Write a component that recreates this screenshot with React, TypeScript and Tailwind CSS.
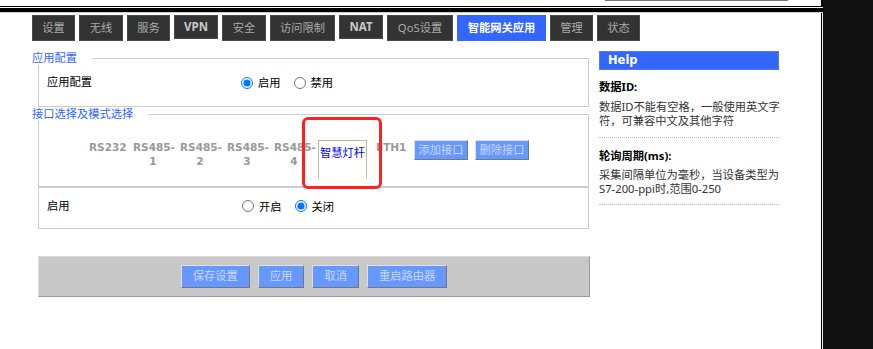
const tabs = [
  { t: '设置', w: 'w-[43px]' },
  { t: '无线', w: 'w-[44px]' },
  { t: '服务', w: 'w-[43px]' },
  { t: 'VPN', w: 'w-[44px]', en: true },
  { t: '安全', w: 'w-[44px]' },
  { t: '访问限制', w: 'w-[65px]' },
  { t: 'NAT', w: 'w-[44px]', en: true },
  { t: 'QoS设置', w: 'w-[66px]' },
  { t: '智能网关应用', w: 'w-[89px]', active: true },
  { t: '管理', w: 'w-[43px]' },
  { t: '状态', w: 'w-[43px]' },
];

function Radio({ name, on, label, className = '' }: { name: string; on?: boolean; label: string; className?: string }) {
  return (
    <label className={`inline-flex items-center ${className}`}>
      <input type="radio" name={name} defaultChecked={on} className="m-0 w-[12px] h-[12px]" />
      <span className="ml-[5px] mt-[2px]">{label}</span>
    </label>
  );
}

function Legend({ children }: { children: React.ReactNode }) {
  return (
    <span className="absolute -top-[8px] -left-[7px] bg-white pr-[15px] leading-[14px] text-[#3366ff]">
      {children}
    </span>
  );
}

export default function App() {
  return (
    <div className="w-[873px] h-[349px] flex bg-[#111] overflow-hidden font-['Noto_Sans','Noto_Sans_CJK_SC',sans-serif] text-[11.25px] text-black">
      <div className="w-[823px] flex flex-col">
        {/* top strip */}
        <div className="h-[6px] bg-white border-r-2 border-black">
          <div className="ml-[605px] w-[183px] h-[1px] bg-[#777]" />
        </div>
        <div className="h-[1px] bg-black" />
        <div className="h-[1px] bg-white" />
        <div className="h-[4px] bg-black" />
        <div className="h-[1px] bg-[#ccc]" />

        <div className="flex-1 flex">
          <div className="flex-1 bg-white">
            {/* tabs */}
            <div className="flex items-start gap-[4px] pl-[32px] mt-[2px]">
              {tabs.map((tab) => (
                <div
                  key={tab.t}
                  className={`${tab.w} flex items-center justify-center whitespace-nowrap ${
                    tab.active
                      ? 'h-[26px] border border-[#3366ff] bg-[#3366ff] text-white font-bold'
                      : tab.en
                        ? 'h-[24px] border border-[#4a4a4a] bg-[#333] text-[#c8c8c8] font-bold text-[11.5px]'
                        : 'h-[26px] border border-[#4a4a4a] bg-[#333] text-[#aaa]'
                  }`}
                >
                  {tab.t}
                </div>
              ))}
            </div>

            <div className="flex items-start">
              {/* left column */}
              <div className="ml-[32px] w-[558px]">
                {/* 应用配置 */}
                <div className="relative mt-[17px] ml-[6px] w-[551px] h-[49px] border border-[#ccc] flex items-center">
                  <Legend>应用配置</Legend>
                  <div className="w-[202px] pl-[8px]">应用配置</div>
                  <Radio name="app" on label="启用" />
                  <Radio name="app" label="禁用" className="ml-[13px]" />
                </div>

                {/* 接口选择及模式选择 */}
                <div className="relative mt-[7px] ml-[6px] w-[551px] h-[73px] border border-[#ccc]">
                  <Legend>接口选择及模式选择</Legend>
                  <div className="flex items-start pt-[25px] pl-[50px] font-['DejaVu_Sans',sans-serif] font-bold text-[10.5px] leading-[14px] text-[#999] whitespace-nowrap">
                    <div className="w-[36px] text-center">RS232</div>
                    <div className="ml-[8px] w-[40px] text-center">RS485-<br />1</div>
                    <div className="ml-[7px] w-[40px] text-center">RS485-<br />2</div>
                    <div className="ml-[7px] w-[40px] text-center">RS485-<br />3</div>
                    <div className="ml-[7px] w-[40px] text-center">RS485-<br />4</div>
                    <div className="ml-[4px] w-[49px] h-[38px] border border-b-0 border-[#a9c29a] pt-[5px] pl-[1px] font-['Noto_Sans','Noto_Sans_CJK_SC',sans-serif] font-normal text-[11.25px] text-[#0000ff]">
                      智慧灯杆
                    </div>
                    <div className="ml-[9px] w-[28px] text-center">ETH1</div>
                    <div className="ml-[10px] w-[54px] h-[20px] flex items-center justify-center bg-[#6699ff] border border-t-[#dde] border-l-[#dde] border-b-[#777] border-r-[#777] font-['Noto_Sans','Noto_Sans_CJK_SC',sans-serif] font-normal text-[11.25px] text-[#cdd6ff]">
                      添加接口
                    </div>
                    <div className="ml-[7px] w-[54px] h-[20px] flex items-center justify-center bg-[#6699ff] border border-t-[#dde] border-l-[#dde] border-b-[#777] border-r-[#777] font-['Noto_Sans','Noto_Sans_CJK_SC',sans-serif] font-normal text-[11.25px] text-[#cdd6ff]">
                      删除接口
                    </div>
                  </div>
                  {/* red annotation */}
                  <div className="absolute z-10 left-[263px] top-[2px] w-[80px] h-[72px] border-[3px] border-[#ff2020] rounded-[6px]" />
                </div>

                {/* 启用 */}
                <div className="ml-[6px] w-[551px] h-[42px] border border-[#ccc] pb-[4px] flex items-center">
                  <div className="w-[203px] pl-[8px]">启用</div>
                  <Radio name="en" label="开启" />
                  <Radio name="en" on label="关闭" className="ml-[13px]" />
                </div>

                {/* bottom bar */}
                <div className="mt-[27px] ml-[6px] w-[552px] h-[41px] bg-[#c8c8c8] border border-t-[#ddd] border-l-[#ddd] border-b-[#999] border-r-[#999] flex items-center justify-center gap-[8px]">
                  {['保存设置', '应用', '取消', '重启路由器'].map((b) => (
                    <div
                      key={b}
                      className="h-[23px] px-[11px] flex items-center bg-[#6699ff] border border-t-[#e0e0e0] border-l-[#e0e0e0] border-b-[#777] border-r-[#777] text-[#cdd6ff]"
                    >
                      {b}
                    </div>
                  ))}
                </div>
              </div>

              {/* help */}
              <div className="ml-[9px] mt-[10px] w-[180px]">
                <div className="h-[19px] bg-[#3366ff] border border-[#5577ee] pl-[8px] flex items-center font-['DejaVu_Sans',sans-serif] font-bold text-[11.5px] text-white">
                  Help
                </div>
                <div className="pt-[10px] pb-[9px] border-b border-dotted border-[#bbb]">
                  <div className="font-bold leading-[14px]">数据ID:</div>
                  <div className="mt-[6px] leading-[14px] text-[#333]">
                    <div className="whitespace-nowrap">数据ID不能有空格，一般使用英文字</div>
                    <div>符，可兼容中文及其他字符</div>
                  </div>
                </div>
                <div className="pt-[11px] pb-[8px] border-b border-dotted border-[#bbb]">
                  <div className="font-bold leading-[14px]">轮询周期(ms):</div>
                  <div className="mt-[5px] leading-[14px] text-[#333]">
                    <div className="whitespace-nowrap">采集间隔单位为毫秒，当设备类型为</div>
                    <div>S7-200-ppi时,范围0-250</div>
                  </div>
                </div>
              </div>
            </div>
          </div>
          <div className="w-[1px] bg-black" />
          <div className="w-[1px] bg-[#eee]" />
        </div>
      </div>
    </div>
  );
}
